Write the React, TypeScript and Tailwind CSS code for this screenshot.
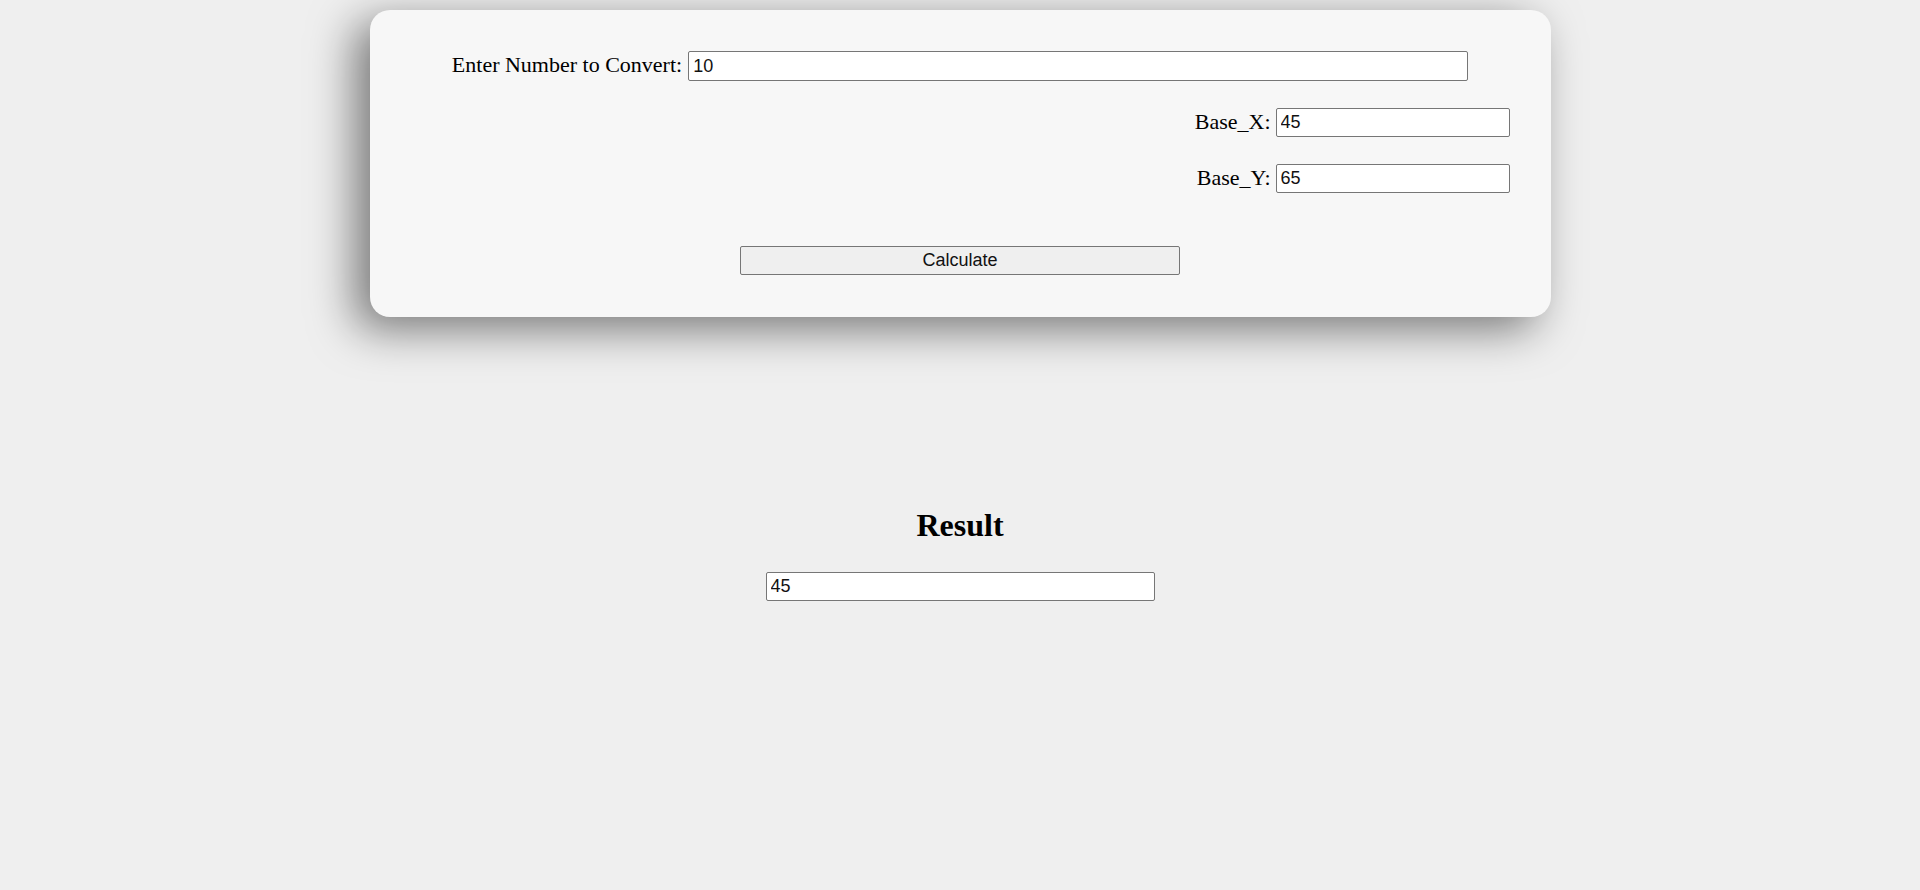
import React, { useState } from "react";

export default function App() {
  const [num, setNum] = useState("10");
  const [bx, setBx] = useState("45");
  const [by, setBy] = useState("65");
  const [res, setRes] = useState("45");

  const serif = { fontFamily: '"Liberation Serif", "Times New Roman", serif' };
  const inputCls =
    "border border-[#767676] bg-white rounded-[2px] px-[4px] text-[18px] text-[#111] outline-none font-['Liberation_Sans',Arial,sans-serif]";

  return (
    <div className="min-h-[890px] w-full bg-[#efefef] pt-[10px]" style={serif}>
      <div className="mx-auto w-[1181px] rounded-[20px] bg-[#f7f7f7] pt-[41px] pb-[42px] shadow-[-15px_12px_45px_rgba(0,0,0,0.5)]">
        <div className="flex h-[30px] items-center justify-center gap-[6px]">
          <label className="pb-[2px] text-[22px] text-black leading-none">Enter Number to Convert:</label>
          <input
            className={`${inputCls} h-[30px] w-[780px]`}
            value={num}
            onChange={(e) => setNum(e.target.value)}
          />
        </div>
        <div className="mt-[27px] flex h-[29px] items-center justify-end gap-[5px] pr-[41px]">
          <label className="pb-[2px] text-[22px] text-black leading-none">Base_X:</label>
          <input
            className={`${inputCls} h-[29px] w-[234px]`}
            value={bx}
            onChange={(e) => setBx(e.target.value)}
          />
        </div>
        <div className="mt-[27px] flex h-[29px] items-center justify-end gap-[5px] pr-[41px]">
          <label className="pb-[2px] text-[22px] text-black leading-none">Base_Y:</label>
          <input
            className={`${inputCls} h-[29px] w-[234px]`}
            value={by}
            onChange={(e) => setBy(e.target.value)}
          />
        </div>
        <div className="mt-[53px] flex justify-center">
          <button
            className="h-[29px] w-[440px] rounded-[2px] border border-[#767676] bg-[#efefef] text-[18px] text-[#111] font-['Liberation_Sans',Arial,sans-serif]"
            onClick={() => setRes(bx)}
          >
            Calculate
          </button>
        </div>
      </div>

      <div className="mt-[190px] flex flex-col items-center">
        <h1 className="text-[32px] font-bold leading-[37px] text-black">Result</h1>
        <input
          className={`${inputCls} mt-[28px] h-[29px] w-[389px]`}
          value={res}
          onChange={(e) => setRes(e.target.value)}
        />
      </div>
    </div>
  );
}
